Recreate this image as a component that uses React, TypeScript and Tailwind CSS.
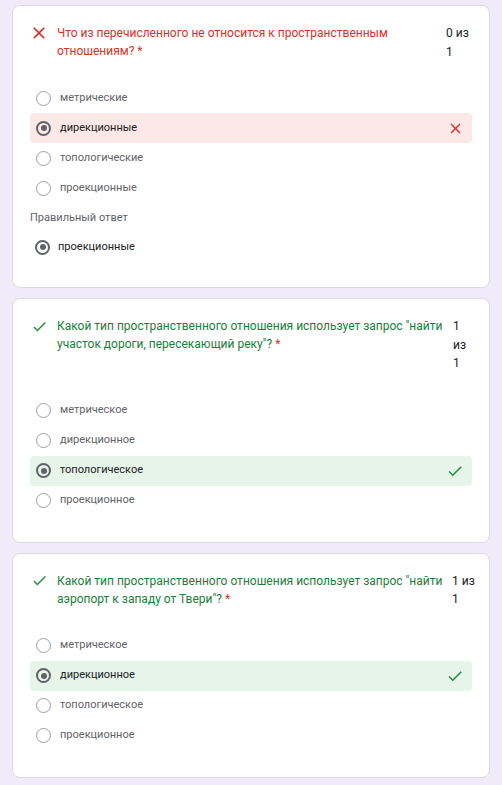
import { SVGProps } from "react"

type Option = { label: string; selected?: boolean }

type Question = {
  status: "wrong" | "right"
  lines: string[]
  score: string[]
  scoreW: string
  options: Option[]
  correct?: string
}

const questions: Question[] = [
  {
    status: "wrong",
    lines: ["Что из перечисленного не относится к пространственным", "отношениям?"],
    score: ["0 из", "1"],
    scoreW: "w-[26px]",
    options: [
      { label: "метрические" },
      { label: "дирекционные", selected: true },
      { label: "топологические" },
      { label: "проекционные" },
    ],
    correct: "проекционные",
  },
  {
    status: "right",
    lines: ["Какой тип пространственного отношения использует запрос \"найти", "участок дороги, пересекающий реку\"?"],
    score: ["1", "из", "1"],
    scoreW: "w-[19px]",
    options: [
      { label: "метрическое" },
      { label: "дирекционное" },
      { label: "топологическое", selected: true },
      { label: "проекционное" },
    ],
  },
  {
    status: "right",
    lines: ["Какой тип пространственного отношения использует запрос \"найти", "аэропорт к западу от Твери\"?"],
    score: ["1 из", "1"],
    scoreW: "w-[20px]",
    options: [
      { label: "метрическое" },
      { label: "дирекционное", selected: true },
      { label: "топологическое" },
      { label: "проекционное" },
    ],
  },
]

export default function App() {
  return (
    <div
      className="min-h-screen bg-[#f0ebf8] px-3 pt-[5px] pb-3 flex flex-col gap-[10px]"
      style={{ fontFamily: "Roboto, 'Liberation Sans', sans-serif" }}
    >
      {questions.map((q, i) => (
        <QuestionCard key={i} q={q} />
      ))}
    </div>
  )
}

function QuestionCard({ q }: { q: Question }) {
  const wrong = q.status === "wrong"
  return (
    <div className={`bg-white border border-[#dadce0] rounded-lg px-[17px] pt-[18px] ${q.correct ? "pb-[25px]" : "pb-[26px]"}`}>

      <div className="flex items-start">
        <div className="w-[27px] shrink-0 h-[18px] flex items-center">
          {wrong ? (
            <MdClose className="text-[20px] text-[#d93025] -ml-px" />
          ) : (
            <MdCheck className="text-[17px] text-[#1e8e3e] ml-px" />
          )}
        </div>
        <div className={`flex-1 text-[12px] leading-[18px] ${wrong ? "text-[#d93025]" : "text-[#188038]"}`}>
          {q.lines.map((l, i) => (
            <div key={i} className="whitespace-nowrap">
              {l}
              {i === q.lines.length - 1 && <span className="text-[#d93025]"> *</span>}
            </div>
          ))}
        </div>
        <div className={`shrink-0 text-[12px] leading-[18.5px] text-[#202124] ${q.scoreW}`}>
          {q.score.map((s, i) => (
            <div key={i} className="whitespace-nowrap">{s}</div>
          ))}
        </div>
      </div>

      <div className={`flex flex-col ${q.score.length === 3 ? "mt-[23px]" : "mt-[22px]"}`}>
        {q.options.map((o, i) => (
          <OptionRow key={i} o={o} status={q.status} />
        ))}
      </div>

      {q.correct && (
        <>
          <div className="mt-[6px] text-[11px] leading-[18px] text-[#5f6368]">Правильный ответ</div>
          <div className="mt-[5px] h-[30px] flex items-center pl-[5px] gap-[8px]">
            <Radio selected />
            <span className="text-[11px] text-[#202124]">{q.correct}</span>
          </div>
        </>
      )}
    </div>
  )
}

function OptionRow({ o, status }: { o: Option; status: "wrong" | "right" }) {
  const bg = o.selected ? (status === "wrong" ? "bg-[#fce8e6]" : "bg-[#e6f4ea]") : ""
  return (
    <div className={`h-[30px] rounded flex items-center pl-[6px] pr-[8px] gap-[9px] ${bg}`}>
      <Radio selected={o.selected} />
      <span className={`flex-1 text-[11px] ${o.selected ? "text-[#202124]" : "text-[#5f6368]"}`}>
        {o.label}
      </span>
      {o.selected && status === "wrong" && <MdClose className="text-[17px] text-[#d93025]" />}
      {o.selected && status === "right" && <MdCheck className="text-[18px] text-[#1e8e3e]" />}
    </div>
  )
}

function Radio({ selected }: { selected?: boolean }) {
  if (selected) {
    return (
      <div className="w-[15px] h-[15px] rounded-full border-2 border-[#5f6368] flex items-center justify-center shrink-0">
        <div className="w-[6px] h-[6px] rounded-full bg-[#5f6368]" />
      </div>
    )
  }
  return <div className="w-[15px] h-[15px] rounded-full border-[1.5px] border-[#9aa0a6] shrink-0" />
}

function MdClose(props: SVGProps<SVGSVGElement>) {
  return (
    <svg xmlns="http://www.w3.org/2000/svg" width="1em" height="1em" viewBox="0 0 24 24" {...props}><path fill="currentColor" d="M19 6.41L17.59 5L12 10.59L6.41 5L5 6.41L10.59 12L5 17.59L6.41 19L12 13.41L17.59 19L19 17.59L13.41 12z"></path></svg>
  )
}

function MdCheck(props: SVGProps<SVGSVGElement>) {
  return (
    <svg xmlns="http://www.w3.org/2000/svg" width="1em" height="1em" viewBox="0 0 24 24" {...props}><path fill="currentColor" d="M9 16.17L4.83 12l-1.42 1.41L9 19L21 7l-1.41-1.41z"></path></svg>
  )
}
